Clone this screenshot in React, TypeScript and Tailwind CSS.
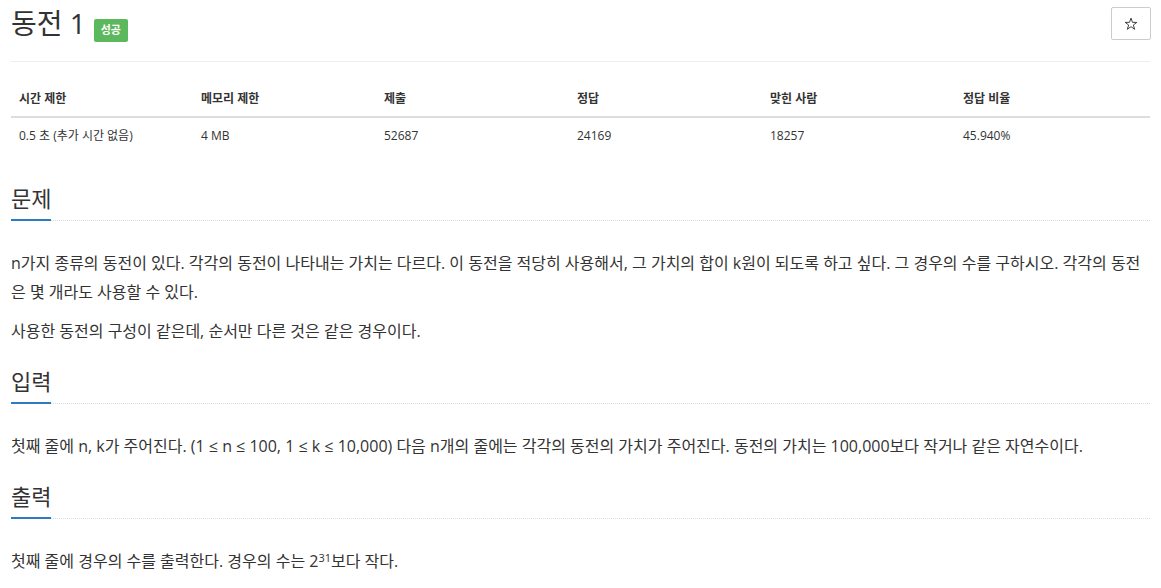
import React from "react";

const font = { fontFamily: '"Open Sans", "Noto Sans CJK KR", sans-serif' };

function SectionHeading({ title }: { title: string }) {
  return (
    <div>
      <div className="text-[22px] leading-[26px] pb-[8px] text-[#333]">{title}</div>
      <div className="flex items-center h-[2px]">
        <div className="w-[40px] h-[2px] bg-[#2e7bc4]" />
        <div className="flex-1 h-0 border-t border-dotted border-[#d3dde8]" />
      </div>
    </div>
  );
}

function Section({ title, children, first }: { title: string; children: React.ReactNode; first?: boolean }) {
  return (
    <div className={first ? "mt-[31px]" : "mt-[22px]"}>
      <SectionHeading title={title} />
      <div className="mt-[28px] text-[16px] leading-[29px] flex flex-col gap-[10px]">{children}</div>
    </div>
  );
}

function Star() {
  return (
    <svg width="14" height="14" viewBox="0 0 24 24" fill="none" stroke="#333" strokeWidth="1.6" strokeLinejoin="miter">
      <polygon points="12,2 14.6,9.2 22,9.2 16,13.8 18.3,21 12,16.6 5.7,21 8,13.8 2,9.2 9.4,9.2" />
    </svg>
  );
}

export default function App() {
  const heads = ["시간 제한", "메모리 제한", "제출", "정답", "맞힌 사람", "정답 비율"];
  const vals = ["0.5 초 (추가 시간 없음)", "4 MB", "52687", "24169", "18257", "45.940%"];
  return (
    <div className="bg-white min-h-[588px] px-[11px] text-[#333] flex flex-col" style={font}>
      <div className="flex items-start justify-between pt-[7px]">
        <div className="flex items-start h-[33px]">
          <span className="text-[28px] leading-[33px] text-[#333]">동전 1</span>
          <span className="ml-[8px] mt-[12px] h-[23px] w-[34px] flex items-center justify-center bg-[#5cb85c] text-white text-[11px] font-bold rounded-[2px]">
            성공
          </span>
        </div>
        <button className="w-[40px] h-[33px] border border-[#ccc] rounded-[2px] bg-white flex items-center justify-center mr-[-1px]">
          <Star />
        </button>
      </div>
      <div className="mt-[21px] border-t border-[#eee]" />
      <div className="mt-[19px] grid grid-cols-[182px_183px_193px_193px_193px_1fr]">
        {heads.map((h) => (
          <div key={h} className="px-[8px] pt-[8px] pb-[7px] leading-[20px] text-[12px] font-bold border-b-2 border-[#ddd]">
            {h}
          </div>
        ))}
        {vals.map((v) => (
          <div key={v} className="px-[8px] py-[8px] leading-[20px] text-[12px]">
            {v}
          </div>
        ))}
      </div>

      <Section title="문제" first>
        <p>
          n가지 종류의 동전이 있다. 각각의 동전이 나타내는 가치는 다르다. 이 동전을 적당히 사용해서, 그 가치의 합이 k원이 되도록 하고 싶다. 그 경우의 수를 구하시오. 각각의 동전은 몇 개라도 사용할 수 있다.
        </p>
        <p>사용한 동전의 구성이 같은데, 순서만 다른 것은 같은 경우이다.</p>
      </Section>

      <Section title="입력">
        <p>
          첫째 줄에 n, k가 주어진다. (1 ≤ n ≤ 100, 1 ≤ k ≤ 10,000) 다음 n개의 줄에는 각각의 동전의 가치가 주어진다. 동전의 가치는 100,000보다 작거나 같은 자연수이다.
        </p>
      </Section>

      <Section title="출력">
        <p>
          첫째 줄에 경우의 수를 출력한다. 경우의 수는 2<sup className="text-[11px]">31</sup>보다 작다.
        </p>
      </Section>
    </div>
  );
}
